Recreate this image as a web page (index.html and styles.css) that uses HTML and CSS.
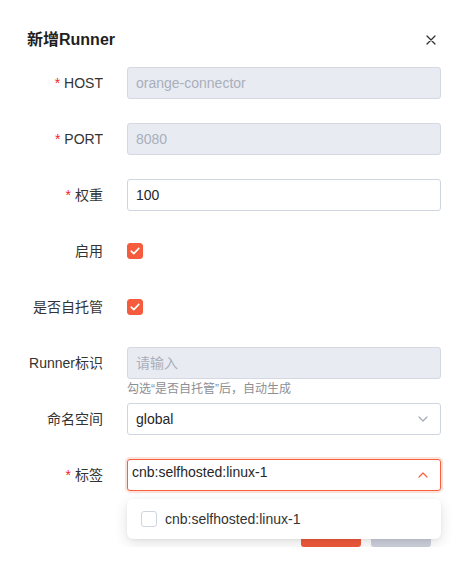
FILE: index.html
```html
<!DOCTYPE html>
<html lang="zh">
<head>
<meta charset="utf-8">
<title>新增Runner</title>
<link rel="stylesheet" href="styles.css">
</head>
<body>
<div class="dialog">
  <div class="header">
    <div class="title">新增Runner</div>
    <button class="close" aria-label="关闭">
      <svg width="10" height="10" viewBox="0 0 10 10"><path d="M1 1L9 9M9 1L1 9" stroke="#333" stroke-width="1.3" stroke-linecap="round"/></svg>
    </button>
  </div>
  <form class="form">
    <div class="row">
      <label class="label"><span class="req">*</span>HOST</label>
      <div class="control"><div class="input disabled">orange-connector</div></div>
    </div>
    <div class="row">
      <label class="label"><span class="req">*</span>PORT</label>
      <div class="control"><div class="input disabled">8080</div></div>
    </div>
    <div class="row">
      <label class="label"><span class="req">*</span>权重</label>
      <div class="control"><div class="input">100</div></div>
    </div>
    <div class="row">
      <label class="label">启用</label>
      <div class="control"><span class="checkbox checked"><svg width="10" height="8" viewBox="0 0 10 8"><path d="M1.2 4.2L3.8 6.6L8.8 1.4" fill="none" stroke="#fff" stroke-width="1.6" stroke-linecap="round" stroke-linejoin="round"/></svg></span></div>
    </div>
    <div class="row">
      <label class="label">是否自托管</label>
      <div class="control"><span class="checkbox checked"><svg width="10" height="8" viewBox="0 0 10 8"><path d="M1.2 4.2L3.8 6.6L8.8 1.4" fill="none" stroke="#fff" stroke-width="1.6" stroke-linecap="round" stroke-linejoin="round"/></svg></span></div>
    </div>
    <div class="row has-hint">
      <label class="label">Runner标识</label>
      <div class="control">
        <div class="input disabled">请输入</div>
        <div class="hint">勾选“是否自托管”后，自动生成</div>
      </div>
    </div>
    <div class="row">
      <label class="label">命名空间</label>
      <div class="control">
        <div class="input select">global
          <svg class="chev" width="10" height="6" viewBox="0 0 10 6"><path d="M1 1L5 5L9 1" fill="none" stroke="#a3a9b5" stroke-width="1.2" stroke-linecap="round" stroke-linejoin="round"/></svg>
        </div>
      </div>
    </div>
    <div class="row">
      <label class="label"><span class="req">*</span>标签</label>
      <div class="control menu-anchor">
        <div class="input select open"><span class="value">cnb:selfhosted:linux-1</span>
          <svg class="chev" width="10" height="6" viewBox="0 0 10 6"><path d="M1 5L5 1L9 5" fill="none" stroke="#f5603f" stroke-width="1.2" stroke-linecap="round" stroke-linejoin="round"/></svg>
        </div>
        <div class="menu">
          <div class="option"><span class="checkbox"></span>cnb:selfhosted:linux-1</div>
        </div>
      </div>
    </div>
    <div class="footer">
      <button type="button" class="btn primary">确定</button>
      <button type="button" class="btn">取消</button>
    </div>
  </form>
</div>
</body>
</html>
```

FILE: styles.css
```css
* { box-sizing: border-box; }
html, body { margin: 0; padding: 0; background: #fff; }
body {
  font-family: "Liberation Sans", "Noto Sans CJK SC", sans-serif;
  font-size: 14px;
  color: #262626;
}
.dialog { padding: 28px 27px 0 27px; }
.header {
  display: flex;
  align-items: center;
  justify-content: space-between;
  height: 24px;
}
.title { font-size: 16px; font-weight: bold; color: #1f1f1f; line-height: 24px; }
.close {
  width: 20px; height: 20px; border: 0; padding: 0; background: none;
  display: flex; align-items: center; justify-content: center;
}
.form { margin-top: 15px; }
.row {
  display: grid;
  grid-template-columns: 76px 1fr;
  column-gap: 24px;
  margin-bottom: 24px;
}
.row.has-hint { margin-bottom: 0; }
.label {
  text-align: right;
  line-height: 32px;
  height: 32px;
  color: #333;
  white-space: nowrap;
}
.req { color: #f5222d; margin-right: 4px; font-family: "Liberation Sans", sans-serif; }
.control { display: flex; flex-direction: column; justify-content: center; min-height: 32px; }
.input {
  height: 32px;
  border: 1px solid #cfd5e0;
  border-radius: 3px;
  padding: 0 8px;
  line-height: 30px;
  color: #262626;
  background: #fff;
}
.input.disabled { background: #e8ebf2; border-color: #d3d8e2; color: #a9afbb; }
.select { display: flex; align-items: center; justify-content: space-between; padding-right: 10px; }
.chev { margin-right: 2px; }
.select.open {
  border-color: #f5603f;
  box-shadow: 0 0 0 2px rgba(245, 96, 63, 0.18);
  padding-left: 4px;
  align-items: flex-start;
}
.select.open .value { line-height: 22px; padding-top: 1px; }
.select.open .chev { margin-top: 12px; }
.hint { height: 24px; line-height: 20px; font-size: 12px; color: #8c8f96; }
.checkbox {
  width: 16px; height: 16px;
  border: 1px solid #cfd5e0;
  border-radius: 3px;
  background: #fff;
  display: inline-flex; align-items: center; justify-content: center;
  flex: none;
}
.checkbox.checked { background: #f55c3e; border-color: #f55c3e; }
.menu-anchor { position: relative; }
.menu {
  position: absolute;
  left: 0; right: 0; top: 40px;
  height: 40px;
  background: #fff;
  border-radius: 6px;
  box-shadow: 0 4px 14px rgba(0, 0, 0, 0.12), 0 1px 3px rgba(0, 0, 0, 0.05);
  display: flex; align-items: center;
  padding: 0 14px;
  z-index: 10;
}
.option { display: flex; align-items: center; gap: 8px; color: #333; }
.footer { display: flex; justify-content: flex-end; gap: 10px; margin-right: 10px; }
.btn {
  width: 60px; height: 32px;
  border: 0; border-radius: 3px;
  background: #cdd1dc; color: #fff;
  font: inherit;
}
.btn.primary { background: #f05a3c; }
```
